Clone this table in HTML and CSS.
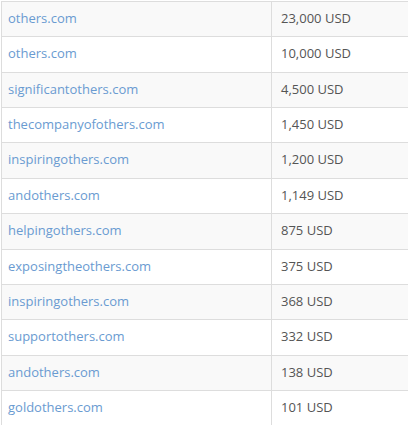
FILE: index.html
```html
<!DOCTYPE html>
<html>
<head>
<meta charset="utf-8">
<link rel="stylesheet" href="styles.css">
</head>
<body>
<table class="sales">
<tbody>
<tr><td class="dom"><a href="#">others.com</a></td><td class="price">23,000 USD</td></tr>
<tr><td class="dom"><a href="#">others.com</a></td><td class="price">10,000 USD</td></tr>
<tr><td class="dom"><a href="#">significantothers.com</a></td><td class="price">4,500 USD</td></tr>
<tr><td class="dom"><a href="#">thecompanyofothers.com</a></td><td class="price">1,450 USD</td></tr>
<tr><td class="dom"><a href="#">inspiringothers.com</a></td><td class="price">1,200 USD</td></tr>
<tr><td class="dom"><a href="#">andothers.com</a></td><td class="price">1,149 USD</td></tr>
<tr><td class="dom"><a href="#">helpingothers.com</a></td><td class="price">875 USD</td></tr>
<tr><td class="dom"><a href="#">exposingtheothers.com</a></td><td class="price">375 USD</td></tr>
<tr><td class="dom"><a href="#">inspiringothers.com</a></td><td class="price">368 USD</td></tr>
<tr><td class="dom"><a href="#">supportothers.com</a></td><td class="price">332 USD</td></tr>
<tr><td class="dom"><a href="#">andothers.com</a></td><td class="price">138 USD</td></tr>
<tr><td class="dom"><a href="#">goldothers.com</a></td><td class="price">101 USD</td></tr>
</tbody>
</table>
</body>
</html>
```
FILE: styles.css
```css
html, body {
  margin: 0;
  padding: 0;
  background: #fff;
}
body {
  font-family: "Open Sans", "Liberation Sans", sans-serif;
  font-size: 13px;
  line-height: 18.36px;
  color: #555;
  padding-top: 1px;
}
.sales {
  border-collapse: collapse;
  width: 420px;
  margin-left: 1px;
}
.sales td {
  border: 1px solid #ddd;
  padding: 7px 6px 9px;
  vertical-align: top;
}
.sales tr:nth-child(odd) td {
  background: #f9f9f9;
}
.sales .dom {
  width: 257px;
}
.sales .price {
  padding-left: 9px;
}
.sales a {
  color: #6a9bd1;
  text-decoration: none;
}
```
